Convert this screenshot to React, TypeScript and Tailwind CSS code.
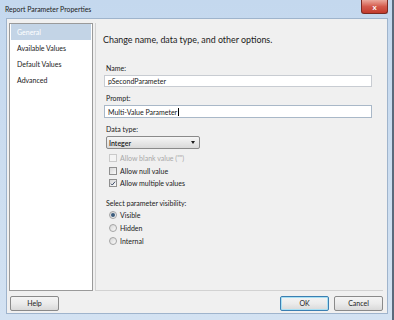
import { useState } from "react";

const font = { fontFamily: 'Lato, "Open Sans", sans-serif' };

function Check({
  label,
  checked = false,
  disabled = false,
}: {
  label: string;
  checked?: boolean;
  disabled?: boolean;
}) {
  return (
    <div className="flex h-[12.5px] items-center gap-[3px] pl-[5px]">
      <span
        className={`flex h-[8px] w-[8px] items-center justify-center border ${
          disabled
            ? "border-[#cacaca] bg-[#f4f4f4]"
            : "border-[#8f8f8f] bg-gradient-to-br from-[#d6d6d6] to-[#fafafa]"
        }`}
      >
        {checked && (
          <svg viewBox="0 0 8 8" className="h-[7px] w-[7px]">
            <path d="M1.2 4.2 L3 6 L6.8 1.5" fill="none" stroke="#2a3a5a" strokeWidth="1.2" />
          </svg>
        )}
      </span>
      <span className={disabled ? "text-[#a8a8a8]" : "text-[#1a1a1a]"}>{label}</span>
    </div>
  );
}

function Radio({ label, checked = false }: { label: string; checked?: boolean }) {
  return (
    <div className="flex h-[13px] items-center gap-[3px] pl-[5px]">
      <span className="flex h-[8px] w-[8px] items-center justify-center rounded-full border border-[#a4a4a4] bg-gradient-to-br from-[#d6d6d6] to-[#fbfbfb]">
        {checked && <span className="h-[4px] w-[4px] rounded-full bg-[#3c5c7c]" />}
      </span>
      <span className="text-[#1a1a1a]">{label}</span>
    </div>
  );
}

function Button({ label, focused = false }: { label: string; focused?: boolean }) {
  return (
    <button
      type="button"
      className={`h-[15px] w-[49px] rounded-[2px] border bg-gradient-to-b from-[#f4f4f4] via-[#ebebeb] to-[#d9d9d9] text-[7px] leading-none text-[#1a1a1a] ${
        focused ? "border-[#3c7fb1] shadow-[inset_0_0_0_1px_#a8e0f4]" : "border-[#8a8a8a]"
      }`}
    >
      {label}
    </button>
  );
}

export default function App() {
  const [page, setPage] = useState("General");
  const pages = ["General", "Available Values", "Default Values", "Advanced"];

  return (
    <div
      style={font}
      className="flex h-[320px] w-[394px] flex-col overflow-hidden border-r-2 border-r-[#5a6a7c] bg-gradient-to-b from-[#c4d8ee] to-[#d3e2f2] text-[7px] leading-[10px]"
    >
      <div className="flex h-[18px] shrink-0 items-start justify-between">
        <span className="pl-[5px] pt-[4px] text-[6.9px] text-[#1c1c1c]">
          Report Parameter Properties
        </span>
        <div className="mr-[4px] flex h-[14px] w-[27px] items-center justify-center rounded-b-[3px] border border-t-0 border-[#7a2a22] bg-gradient-to-b from-[#eaa89c] via-[#d45a4c] to-[#c23a2c]">
          <span className="text-[8px] font-bold leading-none text-white">x</span>
        </div>
      </div>

      <div className="flex flex-1 flex-col pb-[6px] pl-[6px] pr-[4px]">
        <div className="flex flex-1 flex-col border border-[#9fb4cc] bg-[#f0f0f0]">
          <div className="flex flex-1 pl-[2px] pr-[4px] pt-[4px]">
            <div className="flex w-[84px] flex-col border border-[#9a9a9a] bg-white px-[1px]">
              {pages.map((p) => (
                <div
                  key={p}
                  onClick={() => setPage(p)}
                  className={`flex h-[16px] items-center pl-[6px] ${
                    page === p ? "bg-[#c3d4e6] text-white" : "text-[#1a1a1a]"
                  }`}
                >
                  {p}
                </div>
              ))}
            </div>
            <div className="ml-[2px] flex flex-1 flex-col border-b border-l border-[#d2d2d2] pl-[8px] pr-[11px]">
              <div className="-ml-[1px] pt-[11px] text-[8.9px] leading-[12px] text-[#1a1a1a]">
                Change name, data type, and other options.
              </div>

              <div className="mt-[17px] pl-[2px] text-[#1a1a1a]">Name:</div>
              <div className="mt-[2px] flex h-[12px] items-center border border-[#c8ccd2] bg-white pl-[3px] text-[#1a1a1a]">
                pSecondParameter
              </div>

              <div className="mt-[6px] pl-[2px] text-[#1a1a1a]">Prompt:</div>
              <div className="mt-[2px] flex h-[13px] items-center border border-[#a9b8c8] bg-white pl-[3px] text-[#1a1a1a]">
                Multi-Value Parameter
                <span className="ml-[1px] h-[8px] w-px bg-black" />
              </div>

              <div className="mt-[6px] pl-[2px] text-[#1a1a1a]">Data type:</div>
              <div className="ml-[2px] mt-[2px] flex h-[13px] w-[94px] items-center justify-between rounded-[2px] border border-[#8a8a8a] bg-gradient-to-b from-[#f6f6f6] to-[#dadada] pl-[2px] pr-[4px]">
                <span className="font-semibold text-[#1a1a1a]">Integer</span>
                <span className="h-0 w-0 border-l-[2.5px] border-r-[2.5px] border-t-[3px] border-l-transparent border-r-transparent border-t-[#1a1a1a]" />
              </div>

              <div className="mt-[3px]">
                <Check label={'Allow blank value ("")'} disabled />
                <Check label="Allow null value" />
                <Check label="Allow multiple values" checked />
              </div>

              <div className="mt-[8px] pl-[2px] text-[#1a1a1a]">Select parameter visibility:</div>
              <div className="mt-[1px]">
                <Radio label="Visible" checked />
                <Radio label="Hidden" />
                <Radio label="Internal" />
              </div>
            </div>
          </div>

          <div className="flex shrink-0 items-center justify-between pb-[2px] pl-[3px] pr-[4px] pt-[5px]">
            <Button label="Help" />
            <div className="flex gap-[5px]">
              <Button label="OK" focused />
              <Button label="Cancel" />
            </div>
          </div>
        </div>
      </div>
    </div>
  );
}
